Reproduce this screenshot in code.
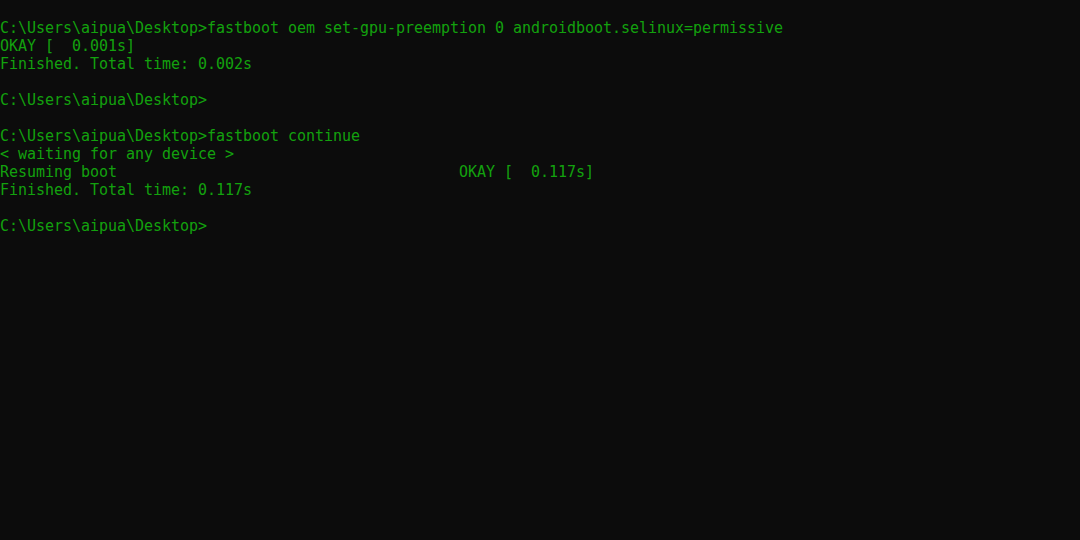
export default function App() {
  const lines = [
    "",
    "C:\\Users\\aipua\\Desktop>fastboot oem set-gpu-preemption 0 androidboot.selinux=permissive",
    "OKAY [  0.001s]",
    "Finished. Total time: 0.002s",
    "",
    "C:\\Users\\aipua\\Desktop>",
    "",
    "C:\\Users\\aipua\\Desktop>fastboot continue",
    "< waiting for any device >",
    "Resuming boot                                      OKAY [  0.117s]",
    "Finished. Total time: 0.117s",
    "",
    "C:\\Users\\aipua\\Desktop>",
  ];
  return (
    <div className="w-[1080px] h-[540px] bg-[#0c0c0c] overflow-hidden pt-px">
      <div
        className="text-[#13a10e] text-[15px] leading-[18px] whitespace-pre tracking-[-0.03px]"
        style={{ fontFamily: '"DejaVu Sans Mono", "Liberation Mono", monospace' }}
      >
        {lines.map((l, i) => (
          <div key={i} className="h-[18px]">{l}</div>
        ))}
      </div>
    </div>
  );
}
